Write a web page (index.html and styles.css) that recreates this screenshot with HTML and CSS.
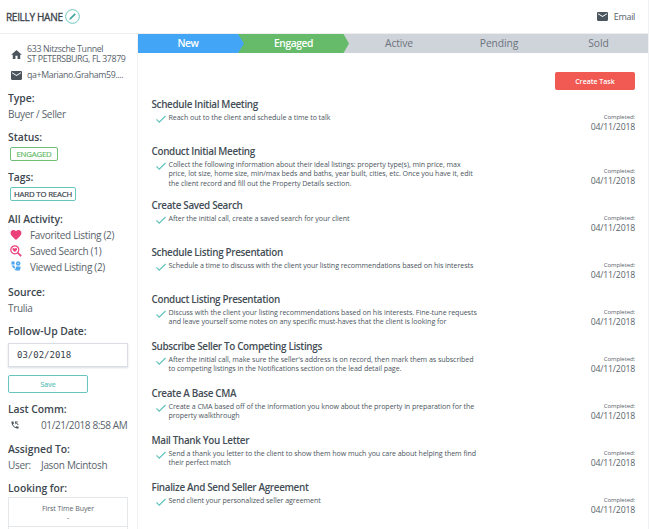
FILE: index.html
```html
<!DOCTYPE html>
<html lang="en">
<head>
<meta charset="utf-8">
<title>Reilly Hane</title>
<link rel="stylesheet" href="styles.css">
</head>
<body>
<div class="app">
  <header class="header">
    <h1 class="name">REILLY HANE</h1>
    <svg class="edit" viewBox="0 0 14 14"><circle cx="7" cy="7" r="6.400" fill="none" stroke="#67c5bc" stroke-width=".9"/><path d="M4 10l.5-1.700L8.900 3.900l1.200 1.200-4.400 4.400z" fill="#45aaa6"/></svg>
    <a class="email"><svg class="mail" viewBox="2 4 20 16"><path d="M20 4H4c-1.100 0-2 .9-2 2v12c0 1.100.9 2 2 2h16c1.100 0 2-.9 2-2V6c0-1.100-.9-2-2-2zm0 4l-8 5-8-5V6l8 5 8-5z"/></svg><span>Email</span></a>
  </header>
  <div class="body">
    <aside class="side">
      <div class="contact address"><svg class="home" viewBox="2 3 20 17"><path d="M10 20v-6h4v6h5v-8h3L12 3 2 12h3v8z"/></svg><p><span class="street">633 Nitzsche Tunnel</span><br><span class="city">ST PETERSBURG, FL 37879</span></p></div>
      <div class="contact address-mail"><svg class="mail" viewBox="2 4 20 16"><path d="M20 4H4c-1.100 0-2 .9-2 2v12c0 1.100.9 2 2 2h16c1.100 0 2-.9 2-2V6c0-1.100-.9-2-2-2zm0 4l-8 5-8-5V6l8 5 8-5z"/></svg><p class="mailtext">qa+Mariano.Graham59....</p></div>
      <section class="type"><h2>Type:</h2><p>Buyer / Seller</p></section>
      <section class="status"><h2>Status:</h2><span class="badge engaged">ENGAGED</span></section>
      <section class="tags"><h2>Tags:</h2><span class="badge tag">HARD TO REACH</span></section>
      <section class="activity"><h2>All Activity:</h2>
        <ul>
          <li><svg class="heart" viewBox="2 3 20 18.400"><path d="M12 21.350l-1.450-1.320C5.400 15.360 2 12.280 2 8.500 2 5.420 4.420 3 7.500 3c1.740 0 3.410.81 4.500 2.090C13.090 3.810 14.760 3 16.500 3 19.580 3 22 5.420 22 8.500c0 3.780-3.400 6.860-8.550 11.540z" fill="#ec407a"/></svg><span>Favorited Listing (2)</span></li>
          <li><svg class="saved" viewBox="0 0 12 12"><g fill="none" stroke="#ec407a"><circle cx="4.800" cy="4.800" r="4" stroke-width="1.200"/><path d="M7.800 7.800l3.400 3.400" stroke-width="1.700"/></g><path d="M4.800 7.100L2.700 5C1.700 3.600 3.800 2.200 4.800 3.700 5.800 2.200 7.900 3.600 6.900 5z" fill="#ec407a"/></svg><span>Saved Search (1)</span></li>
          <li><svg class="viewed" viewBox="0 0 10 10"><g fill="#4da6ee"><path d="M1.200 1.200h2.600v2.600H1.200z"/><circle cx="6.800" cy="2.900" r="1.900"/><path d="M1.200 4.600h2.600v1l1 1.300H3zM5 5.400h3.700v2.300H5z"/><path d="M3.500 7.200h4.700v1.500H4.800z"/></g><circle cx="6.800" cy="2.900" r=".6" fill="#d5eafb"/></svg><span>Viewed Listing (2)</span></li>
        </ul>
      </section>
      <section class="source"><h2>Source:</h2><p>Trulia</p></section>
      <section class="follow"><h2>Follow-Up Date:</h2><div class="date">03/02/2018</div><button class="save">Save</button></section>
      <section class="last"><h2>Last Comm:</h2><div class="row"><svg class="phone" viewBox="2 2 20 20"><path d="M20 15.500c-1.250 0-2.450-.2-3.570-.57-.35-.11-.74-.03-1.020.24l-2.200 2.200c-2.830-1.440-5.150-3.750-6.590-6.590l2.200-2.210c.28-.26.360-.65.250-1C8.700 6.450 8.500 5.250 8.500 4c0-.55-.45-1-1-1H4c-.55 0-1 .45-1 1 0 9.390 7.610 17 17 17 .55 0 1-.45 1-1v-3.500c0-.55-.45-1-1-1zM12 3h7v2h-4l6 6-1.500 1.500-6-6V10H12z"/></svg><span class="stamp">01/21/2018 8:58 AM</span></div></section>
      <section class="assigned"><h2>Assigned To:</h2><div class="row"><span class="user">User:</span><span class="person">Jason Mcintosh</span></div></section>
      <section class="looking"><h2>Looking for:</h2><div class="facts"><div class="fact">First Time Buyer<br>-</div><div class="fact"></div></div></section>
    </aside>
    <main class="main">
      <nav class="steps">
        <div class="step new"><svg viewBox="0 0 106 19" preserveAspectRatio="none"><path d="M0 0h100l6 9.500-6 9.500H0z" fill="#42a5f5"/></svg><span>New</span></div>
        <div class="step engaged-step"><svg viewBox="0 0 111 19" preserveAspectRatio="none"><path d="M0 0h105.500l5.500 9.500-5.500 9.500H0z" fill="#66bb6a"/></svg><span>Engaged</span></div>
        <div class="step active">Active</div><div class="step">Pending</div><div class="step">Sold</div>
      </nav>
      <div class="toolbar"><button class="create">Create Task</button></div>
      <div class="tasks" id="tasks"></div>
    </main>
  </div>
</div>
<script src="tasks.js"></script>
</body>
</html>
```
FILE: styles.css
```css
* { box-sizing: border-box; }
body { margin: 0; font-family: "Open Sans", sans-serif; color: #59636b; background: #fff; }
h1, h2, h3, p, ul { margin: 0; padding: 0; }
button { font-family: inherit; padding: 0; }
svg { display: block; flex: none; fill: #4b555e; }
.app { width: 649px; height: 529px; overflow: hidden; display: flex; flex-direction: column; border-right: 1px solid #f0f1f2; }
.header { height: 34px; flex: none; display: flex; align-items: center; padding: 0 13px 0 6px; border-bottom: 1px solid #eceeef; }
.name { font-size: 10px; line-height: 14px; font-weight: 400; letter-spacing: -.3px; color: #38424a; -webkit-text-stroke: .3px #38424a; }
.edit { width: 15px; height: 15px; margin-left: 2px; }
.email { margin-left: auto; display: flex; align-items: center; gap: 6px; font-size: 9px; letter-spacing: -.35px; }
.mail { width: 11px; height: 9px; }
.body { flex: 1; display: flex; min-height: 0; }
.side { width: 138px; flex: none; border-right: 1px solid #f0f1f2; padding: 9px 9px 0 8px; font-size: 10px; letter-spacing: -.31px; line-height: 16px; }
.contact { display: flex; align-items: center; padding-left: 3px; font-size: 8.800px; letter-spacing: -.3px; white-space: nowrap; }
.contact p { margin-left: 5px; }
.address { height: 22px; line-height: 10.500px; }
.street { letter-spacing: -.34px; }
.city { letter-spacing: -.38px; }
.mailtext { letter-spacing: -.36px; }
.home { width: 11px; height: 9px; }
.address-mail { height: 20px; }
.side section { white-space: nowrap; }
h2 { font-size: 10.400px; line-height: 16px; font-weight: 600; letter-spacing: -.05px; color: #3d474f; }
.type { margin-top: 5px; height: 39px; }
.status { height: 40px; }
.tags { height: 42px; }
.badge { display: flex; align-items: center; justify-content: center; height: 14px; border: 1px solid #71bf75; border-radius: 2px; font-size: 7.800px; letter-spacing: -.18px; -webkit-text-stroke: .2px; margin: 2px 0 0 2px; }
.engaged { width: 48px; color: #66bb6a; }
.tag { width: 66px; border-color: #67c5bc; color: #38424a; }
.activity { height: 73px; }
.activity ul { list-style: none; }
.activity li { display: flex; align-items: center; height: 15.800px; padding-left: 22px; }
.activity li svg { margin-left: -20px; margin-right: 8px; width: 12px; height: 12px; }
.activity li .heart { height: 10px; }
.source { height: 39px; }
.follow { height: 78px; }
.date { margin-top: 4px; height: 24px; width: 120px; border: 1px solid #dadde3; box-shadow: 0 1px 2px #d8dce2; font: 9px/22px "DejaVu Sans Mono", monospace; letter-spacing: 0; color: #38424a; padding-left: 8px; }
.save { display: block; margin-top: 8px; width: 80px; height: 18px; border: 1px solid #67c5bc; border-radius: 2px; background: #fff; color: #67c5bc; font-size: 7px; -webkit-text-stroke: .2px; }
.last { height: 40px; }
.row { display: flex; align-items: center; height: 16px; }
.stamp { letter-spacing: -.39px; }
.phone { width: 8px; height: 8px; margin: 0 22px 0 3px; }
.assigned { height: 39px; }
.user { width: 33px; }
.facts { width: 120px; border: 1px solid #e4e8ea; margin-top: 1px; }
.fact { height: 29px; text-align: center; font-size: 7px; letter-spacing: -.05px; line-height: 9px; padding-top: 6px; border-bottom: 1px solid #e4e8ea; }
.main { flex: 1; min-width: 0; }
.steps { height: 19px; display: grid; grid-template-columns: 100px 105px 106px 100px 1fr; background: #cfd3da; font-size: 10.300px; letter-spacing: -.1px; line-height: 19px; color: #6b747c; text-align: center; }
.step { position: relative; }
.step svg { position: absolute; left: 0; top: 0; height: 19px; }
.step span { position: relative; }
.new, .engaged-step { color: #fff; font-weight: 600; letter-spacing: -.4px; }
.new { z-index: 2; }
.new svg { width: 106px; }
.engaged-step svg { width: 111px; }
.engaged-step span, .active { padding-left: 6px; }
.toolbar { height: 44px; padding: 19px 13px 0 0; display: flex; justify-content: flex-end; }
.create { width: 80px; height: 18px; border: 0; border-radius: 2px; background: #f05a53; color: #fff; font-size: 7px; font-weight: 600; }
.task { display: flex; justify-content: space-between; height: 47px; padding: 0 13px 0 13.500px; }
.task.tall { height: 54px; }
h3 { font-size: 9.900px; line-height: 14px; font-weight: 600; letter-spacing: -.33px; color: #434d55; white-space: nowrap; }
.line { display: flex; }
.check { width: 10px; height: 8px; margin: 4px 3px 0 4px; fill: none; stroke: #5bc2b9; stroke-width: 1.100; }
.desc { font-size: 7.100px; letter-spacing: -.06px; line-height: 9.300px; padding-top: 2px; white-space: nowrap; color: #4b555e; }
.meta { align-self: flex-end; text-align: right; margin-bottom: 12px; font-size: 8.700px; letter-spacing: -.18px; line-height: 10px; }
.meta small { display: block; font-size: 6px; letter-spacing: -.1px; line-height: 10px; }
```
FILE: tasks.js
```js
const tasks = [
  ["Schedule Initial Meeting", ["Reach out to the client and schedule a time to talk"]],
  ["Conduct Initial Meeting", ["Collect the following information about their ideal listings: property type(s), min price, max", "price, lot size, home size, min/max beds and baths, year built, cities, etc. Once you have it, edit", "the client record and fill out the Property Details section."]],
  ["Create Saved Search", ["After the initial call, create a saved search for your client"]],
  ["Schedule Listing Presentation", ["Schedule a time to discuss with the client your listing recommendations based on his interests"]],
  ["Conduct Listing Presentation", ["Discuss with the client your listing recommendations based on his interests. Fine-tune requests", "and leave yourself some notes on any specific must-haves that the client is looking for"]],
  ["Subscribe Seller To Competing Listings", ["After the initial call, make sure the seller's address is on record, then mark them as subscribed", "to competing listings in the Notifications section on the lead detail page."]],
  ["Create A Base CMA", ["Create a CMA based off of the information you know about the property in preparation for the", "property walkthrough"]],
  ["Mail Thank You Letter", ["Send a thank you letter to the client to show them how much you care about helping them find", "their perfect match"]],
  ["Finalize And Send Seller Agreement", ["Send client your personalized seller agreement"]]
];
document.getElementById("tasks").innerHTML = tasks.map(([title, lines]) => `
  <article class="task${lines.length > 2 ? " tall" : ""}">
    <div><h3>${title}</h3><div class="line"><svg class="check" viewBox="0 0 10 8"><path d="M.5 4.300l2.700 2.800L9.500 1"/></svg><p class="desc">${lines.join("<br>")}</p></div></div>
    <div class="meta"><small>Completed:</small>04/11/2018</div>
  </article>`).join("");
```
